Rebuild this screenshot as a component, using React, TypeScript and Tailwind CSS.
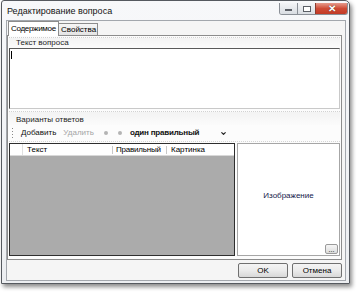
import { ChevronDown } from "lucide-react";

function CaptionButtons() {
  return (
    <div className="mt-[2px] mr-[1px] flex h-[12px] overflow-hidden rounded-b-[3px] border border-[#8a8f96] border-t-0">
      <div className="flex w-[17px] items-end justify-center bg-gradient-to-b from-[#f4f5f7] to-[#d9dde2] pb-[3px]">
        <div className="h-[2px] w-[7px] border border-[#5b5f66] bg-white" />
      </div>
      <div className="flex w-[18px] items-center justify-center border-l border-[#8a8f96] bg-gradient-to-b from-[#f4f5f7] to-[#d9dde2]">
        <div className="h-[6px] w-[8px] border border-[#5b5f66] bg-white" />
      </div>
      <div className="flex w-[32px] items-center justify-center border-l border-[#8a3a2e] bg-gradient-to-b from-[#e69a8c] via-[#cf4b36] to-[#c23a25]">
        <span className="text-[10px] font-bold leading-none text-white [text-shadow:0_0_1px_#3a1a10]">
          ✕
        </span>
      </div>
    </div>
  );
}

function Header({ title }: { title: string }) {
  return (
    <div className="mx-[1px] flex h-full items-end border-t border-dotted border-[#d2d2d2] bg-gradient-to-b from-[#f3f3f3] to-[#fbfbfb] pl-[7px]">
      <span className="leading-[10px] text-[#1e1e1e]">{title}</span>
    </div>
  );
}

function Grid() {
  return (
    <div className="ml-[1px] flex w-[226px] flex-col border border-[#2e2e2e] bg-[#ababab]">
      <div className="flex h-[12px] items-center whitespace-nowrap border-b border-[#d8d8d8] bg-white">
        <div className="h-full w-[13px] border-r border-[#e0e0e0]" />
        <div className="w-[89px] pl-[4px] leading-none">Текст</div>
        <div className="w-[54px] border-l border-[#c8c8c8] pl-[3px] leading-none tracking-[-0.2px]">
          Правильный
        </div>
        <div className="flex-1 border-l border-[#c8c8c8] pl-[4px] leading-none">
          Картинка
        </div>
      </div>
      <div className="flex-1" />
    </div>
  );
}

function ImagePanel() {
  return (
    <div className="ml-[2px] flex w-[103px] flex-col border border-[#a6a6a6] bg-white">
      <div className="flex flex-1 items-center justify-center pt-[4px] text-[#14204a]">
        Изображение
      </div>
      <div className="mb-[1px] mr-[1px] flex h-[10px] w-[13px] items-end justify-center self-end rounded-[2px] border border-[#9a9a9a] bg-gradient-to-b from-[#f6f6f6] to-[#dcdcdc] text-[7px] leading-[6px]">
        ...
      </div>
    </div>
  );
}

function Toolbar() {
  return (
    <div className="flex h-[16px] items-center whitespace-nowrap pl-[4px]">
      <div className="flex h-[11px] w-[3px] flex-col justify-between">
        <span className="h-[1px] w-[1px] bg-[#8a8a8a]" />
        <span className="h-[1px] w-[1px] bg-[#8a8a8a]" />
        <span className="h-[1px] w-[1px] bg-[#8a8a8a]" />
        <span className="h-[1px] w-[1px] bg-[#8a8a8a]" />
      </div>
      <span className="ml-[6px] text-[#111]">Добавить</span>
      <span className="ml-[7px] text-[#a5a5a5]">Удалить</span>
      <span className="ml-[10px] h-[4px] w-[4px] rounded-full bg-[#b4b4b4]" />
      <span className="ml-[10px] h-[4px] w-[4px] rounded-full bg-[#b4b4b4]" />
      <span className="ml-[8px] font-bold tracking-[-0.2px] text-[#111]">один правильный</span>
      <ChevronDown size={7} strokeWidth={4} className="ml-[21px] text-[#222]" />
    </div>
  );
}

export default function App() {
  return (
    <div className="h-[295px] w-[361px] bg-white pl-[1px] font-['Liberation_Sans',Arial,sans-serif] text-[8px] text-black">
      <div className="flex h-[284px] w-[349px] flex-col rounded-tr-[5px] rounded-tl-[3px] border border-[#55595f] bg-gradient-to-b from-[#f7f8fa] to-[#eceef1] shadow-[2px_3px_4px_rgba(0,0,0,0.45)]">
        <div className="flex h-[19px] justify-between">
          <span className="pl-[5px] pt-[5px] text-[9px] leading-[10px] text-[#141414]">
            Редактирование вопроса
          </span>
          <CaptionButtons />
        </div>

        <div className="ml-[4px] flex h-[261px] w-[340px] flex-col border border-[#a3a7ad] bg-[#f5f5f5]">
          <div className="flex h-[14px] items-end whitespace-nowrap pl-[1px]">
            <div className="relative z-10 -mb-px flex h-[15px] w-[51px] items-center border border-b-0 border-[#8c8c8c] bg-white pl-[2px] tracking-[-0.3px]">
              Содержимое
            </div>
            <div className="flex h-[12px] w-[39px] items-center border border-l-0 border-b-0 border-[#8c8c8c] bg-gradient-to-b from-[#f6f6f6] to-[#e4e4e4] pl-[2px]">
              Свойства
            </div>
          </div>

          <div className="flex h-[225px] w-[335px] flex-col border border-[#8c8c8c] bg-[#fcfcfc]">
            <div className="mt-[1px] h-[11px]">
              <Header title="Текст вопроса" />
            </div>
            <div className="mx-[1px] h-[61px] border border-[#c9c9c9] border-l-[#4a4a4a] border-t-[#5a5a5a] bg-white pl-[1px] pt-[2px]">
              <div className="h-[8px] w-[1px] bg-black" />
            </div>
            <div className="mt-[2px] h-[14px]">
              <Header title="Варианты ответов" />
            </div>
            <Toolbar />
            <div className="mx-[1px] h-[2px] border-t border-dotted border-[#d6d6d6]" />
            <div className="flex h-[113px]">
              <Grid />
              <ImagePanel />
            </div>
          </div>

          <div className="mr-[3px] mt-[3px] flex justify-end gap-[4px]">
            <div className="flex h-[15px] w-[50px] items-center justify-center rounded-[2px] border border-[#707070] bg-gradient-to-b from-[#f4f4f4] via-[#ebebeb] to-[#d8d8d8]">
              OK
            </div>
            <div className="flex h-[15px] w-[50px] items-center justify-center rounded-[2px] border border-[#707070] bg-gradient-to-b from-[#f4f4f4] via-[#ebebeb] to-[#d8d8d8]">
              Отмена
            </div>
          </div>
        </div>
      </div>
    </div>
  );
}
